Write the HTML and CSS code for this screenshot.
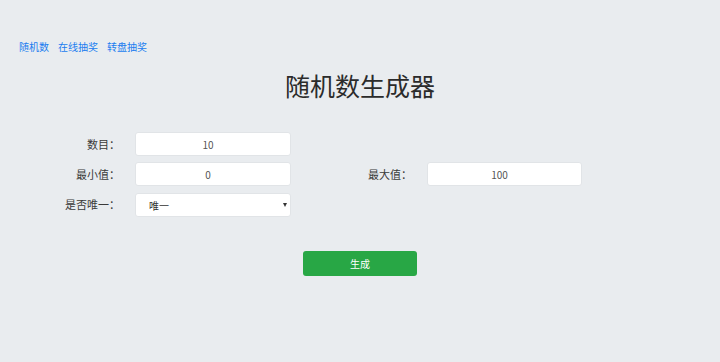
FILE: index.html
```html
<!DOCTYPE html>
<html lang="zh-CN">
<head>
    <meta charset="UTF-8">
    <meta name="viewport" content="width=device-width, initial-scale=1.0">
    <title>随机数生成器</title>
    <link rel="stylesheet" href="styles.css">
</head>
<body>
    <div class="nav">
        <a href="#">随机数</a>
        <a href="#">在线抽奖</a>
        <a href="#">转盘抽奖</a>
    </div>

    <h1 class="title">随机数生成器</h1>

    <div class="form">
        <label class="label">数目：</label>
        <input class="field" type="text" value="10">
        <span></span>
        <span></span>

        <label class="label">最小值：</label>
        <input class="field" type="text" value="0">
        <label class="label">最大值：</label>
        <input class="field" type="text" value="100">

        <label class="label">是否唯一：</label>
        <span class="select-wrap">
            <select class="field select">
                <option>唯一</option>
                <option>不唯一</option>
            </select>
        </span>
    </div>

    <div class="actions">
        <button class="btn">生成</button>
    </div>
</body>
</html>
```

FILE: styles.css
```css
/* 页面整体 */
body {
    margin: 0;
    background: #e9ecef;
    font-family: "Noto Sans CJK SC", "Noto Sans", sans-serif;
    color: #333;
}

/* 顶部导航 */
.nav {
    display: flex;
    gap: 9px;
    padding: 40px 0 0 19px;
    font-size: 10px;
    line-height: 14px;
}

.nav a {
    color: #1a7cf0;
    text-decoration: none;
}

/* 标题 */
.title {
    margin: 16px 0 0;
    text-align: center;
    font-size: 25px;
    line-height: 30px;
    font-weight: normal;
    color: #2b2b2b;
}

/* 表单布局 */
.form {
    display: grid;
    grid-template-columns: 120px 156px 106px 155px;
    column-gap: 15px;
    row-gap: 6px;
    margin-top: 32px;
}

.label {
    text-align: right;
    font-size: 11px;
    line-height: 24px;
    color: #3a3a3a;
}

.field {
    display: block;
    box-sizing: border-box;
    width: 100%;
    height: 24px;
    padding: 0 10px 0 0;
    border: 1px solid #e1e4e7;
    border-radius: 3px;
    background: #fff;
    font-family: inherit;
    font-size: 10px;
    text-align: center;
    color: #555;
    outline: none;
}

/* 下拉框 */
.select-wrap {
    position: relative;
    display: block;
    height: 24px;
    margin-top: 1px;
}

.select {
    appearance: none;
    text-align: left;
    padding-left: 13px;
    color: #333;
}

.select-wrap::after {
    content: "";
    position: absolute;
    right: 4px;
    top: 10px;
    border-left: 2.5px solid transparent;
    border-right: 2.5px solid transparent;
    border-top: 4px solid #333;
}

/* 按钮 */
.actions {
    display: flex;
    justify-content: center;
    margin-top: 34px;
}

.btn {
    width: 114px;
    height: 25px;
    border: none;
    border-radius: 3px;
    background: #28a745;
    color: #fff;
    font-family: inherit;
    font-size: 10px;
    cursor: pointer;
}
```
